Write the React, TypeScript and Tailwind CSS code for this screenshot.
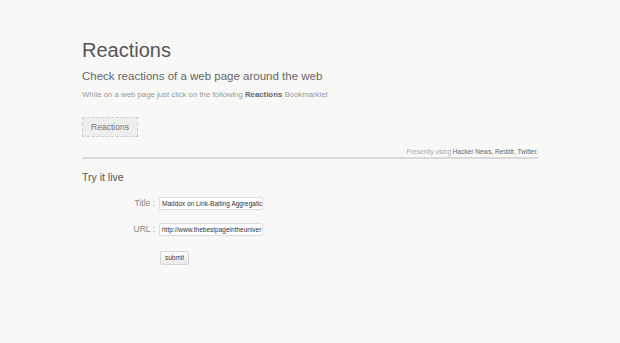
import React from "react";

export default function App() {
  return (
    <div
      className="w-[620px] h-[343px] bg-[#f8f8f6] overflow-hidden"
      style={{ fontFamily: '"Liberation Sans", Arial, sans-serif' }}
    >
      <div className="ml-[82px] w-[456px] pt-[38px]">
        <h1 className="text-[20px] leading-[24px] text-[#555]">Reactions</h1>
        <h2 className="mt-[7px] text-[11.5px] leading-[14px] text-[#666]">
          Check reactions of a web page around the web
        </h2>
        <p className="mt-[7px] text-[7.8px] leading-[10px] text-[#999]">
          While on a web page just click on the following{" "}
          <b className="text-[#666] font-bold">Reactions</b> Bookmarklet
        </p>
        <div className="mt-[17px] flex">
          <span className="w-[56px] h-[20px] flex items-center justify-center border border-dashed border-[#cfcfcf] bg-[#eeeeec] text-[8.5px] text-[#777]">
            Reactions
          </span>
        </div>
        <div className="mt-[11px] text-right text-[6.5px] leading-[8px] text-[#aaa]">
          Presently using <span className="text-[#666]">Hacker News, Reddit, Twitter.</span>
        </div>
        <div className="mt-[1px] h-[2px] bg-[#d9d9d7]" />
        <h3 className="mt-[11px] text-[10.5px] leading-[14px] text-[#555]">Try it live</h3>
        <div className="mt-[13px] flex flex-col">
          <div className="flex items-center h-[13px]">
            <label className="w-[77px] text-right pr-[4px] text-[8.5px] text-[#888]">Title :</label>
            <div className="w-[104px] h-[13px] bg-white border border-[#e0e0e0] rounded-[2px] shadow-[0_0_1px_rgba(0,0,0,0.1)] flex items-center px-[2px] overflow-hidden whitespace-nowrap text-[6.5px] text-[#333]">
              Maddox on Link-Baiting Aggregatic
            </div>
          </div>
          <div className="mt-[13px] flex items-center h-[13px]">
            <label className="w-[77px] text-right pr-[4px] text-[8.5px] text-[#888]">URL :</label>
            <div className="w-[104px] h-[13px] bg-white border border-[#e0e0e0] rounded-[2px] shadow-[0_0_1px_rgba(0,0,0,0.1)] flex items-center px-[2px] overflow-hidden whitespace-nowrap text-[6.5px] text-[#333]">
              http://www.thebestpageintheuniver
            </div>
          </div>
          <div className="mt-[15px] flex">
            <div className="ml-[78px] w-[29px] h-[14px] border border-[#d6d6d6] rounded-[2px] bg-gradient-to-b from-[#fdfdfd] to-[#e9e9e9] flex items-center justify-center text-[6.5px] text-[#444]">
              submit
            </div>
          </div>
        </div>
      </div>
    </div>
  );
}
